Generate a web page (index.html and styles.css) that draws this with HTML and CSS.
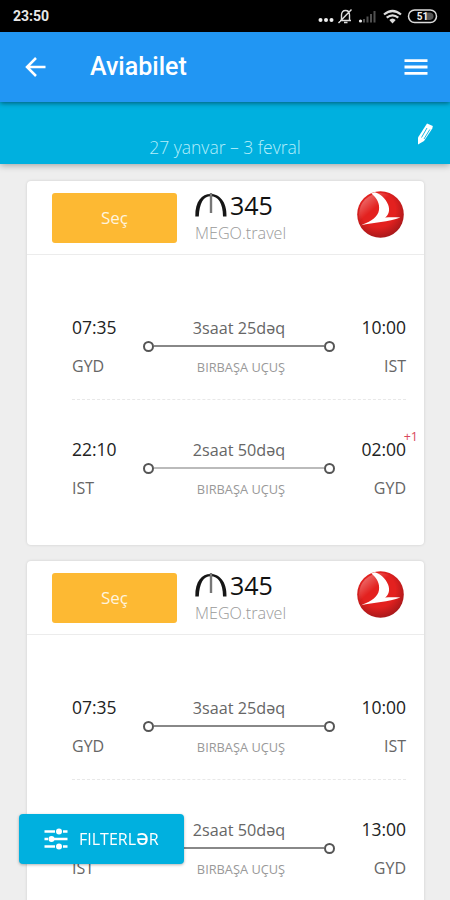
FILE: index.html
```html
<!DOCTYPE html>
<html lang="az">
    <head>
        <meta charset="utf-8">
        <title>Aviabilet</title>
        <meta name="viewport" content="width=device-width, initial-scale=1">
        <link rel="stylesheet" href="styles.css">
    </head>
    <body>
        <svg class="defs" width="0" height="0">
            <defs>
                <radialGradient id="red" cx="45%" cy="40%" r="62%">
                    <stop offset="0.6" stop-color="#e3211f"/>
                    <stop offset="1" stop-color="#a5181a"/>
                </radialGradient>
                <linearGradient id="shine" x1="0" y1="0" x2="0.6" y2="0.7">
                    <stop offset="0" stop-color="#fff" stop-opacity="0.5"/>
                    <stop offset="0.55" stop-color="#fff" stop-opacity="0"/>
                </linearGradient>
            </defs>
            <symbol id="airline" viewBox="0 0 46 46">
                <circle cx="23" cy="23" r="22.8" fill="url(#red)"/>
                <circle cx="23" cy="23" r="21" fill="url(#shine)"/>
                <path d="M14 2.500C19.500 6.500 22.500 13 21.500 18.500C20.500 25 15 29 4 33.500C16 31 31 30.500 42.500 26C37 25.500 32 25.500 27.500 26C31 23.500 32.500 19 30.500 13.500C28 7 23 3 17.500 1.200Z" fill="#fff"/>
            </symbol>
            <symbol id="manat" viewBox="0 0 32 26">
                <path d="M0.300 25.500C0 10 7 3 15.500 3S32 10 31.500 25.500H28C28 12 23 5.200 15.700 5.200S4.500 12 3.800 25.500Z" fill="#161616"/>
                <path d="M16 2V22" stroke="#777" stroke-width="2.400"/>
            </symbol>
        </svg>

        <div class="status">
            <span class="clock">23:50</span>
            <svg width="122" height="20" viewBox="0 0 122 20" fill="none" stroke="#ddd">
                <g fill="#eee" stroke="none">
                    <circle cx="3.500" cy="14" r="2"/><circle cx="9" cy="14" r="2"/><circle cx="14.500" cy="14" r="2"/>
                </g>
                <path d="M23 14.500H34M24.500 14V9C24.500 6 26 4.500 28.500 4.500S32.500 6 32.500 9V14M27 16.500H30.500M21.500 17L34.500 3.500" stroke-width="1.400"/>
                <circle cx="43.500" cy="15" r="1.600" fill="#eee" stroke="none"/>
                <path d="M47 16.500V13M50.500 16.500V10.500M54 16.500V8M57.500 16.500V5" stroke="#505050" stroke-width="2"/>
                <path d="M67 8.500Q75.500 1.500 84 8.500M69.700 11.700Q75.500 7 81.300 11.700" stroke-width="2.200"/>
                <path d="M72.300 14Q75.500 11 78.700 14L75.500 17.500Z" fill="#ddd" stroke="none"/>
                <rect x="91.500" y="4" width="28" height="12.500" rx="6.200" stroke-width="1.500"/>
                <path d="M108 6.500H113Q116.500 7 116.500 10.200T113 14H108Z" fill="#555" stroke="none"/>
                <text x="105.500" y="14" class="battery">51</text>
            </svg>
        </div>

        <header class="toolbar">
            <svg class="back" width="22" height="20" viewBox="0 0 22 20" fill="none" stroke="#fff" stroke-width="2.500">
                <path d="M11 1L2 10L11 19M2 10H20.500"/>
            </svg>
            <h1>Aviabilet</h1>
            <svg width="24" height="17" viewBox="0 0 24 17" stroke="#fff" stroke-width="2.800">
                <path d="M0.500 1.700H23.500M0.500 8H23.500M0.500 14.300H23.500"/>
            </svg>
        </header>

        <div class="dates">
            <span>27 yanvar – 3 fevral</span>
            <svg class="edit" width="16" height="22" viewBox="0 0 16 22">
                <path d="M10 0.500L15.800 3L15.300 5.500L7 18L1 21.500L1 14.500Z" fill="#fff"/>
                <path d="M10 5L4.500 14.500M12.800 6.500L7 16" stroke="#00b0df" stroke-width="0.900"/>
            </svg>
        </div>

        <main class="tickets">
            <article class="ticket">
                <div class="offer">
                    <button class="select">Seç</button>
                    <div class="price">
                        <div class="amount"><svg width="32" height="26"><use href="#manat"/></svg>345</div>
                        <div class="agency">MEGO.travel</div>
                    </div>
                    <svg class="logo" width="47" height="47"><use href="#airline"/></svg>
                </div>
                <div class="flight">
                    <div class="point"><b>07:35</b><span>GYD</span></div>
                    <div class="route">
                        <div class="duration">3saat 25dəq</div>
                        <div class="line"></div>
                        <div class="stops">BIRBAŞA UÇUŞ</div>
                    </div>
                    <div class="point arrival"><b>10:00</b><span>IST</span></div>
                </div>
                <div class="flight">
                    <div class="point"><b>22:10</b><span>IST</span></div>
                    <div class="route">
                        <div class="duration">2saat 50dəq</div>
                        <div class="line pale"></div>
                        <div class="stops">BIRBAŞA UÇUŞ</div>
                    </div>
                    <div class="point arrival"><b>02:00</b><i class="next-day">+1</i><span>GYD</span></div>
                </div>
            </article>

            <article class="ticket">
                <div class="offer">
                    <button class="select">Seç</button>
                    <div class="price">
                        <div class="amount"><svg width="32" height="26"><use href="#manat"/></svg>345</div>
                        <div class="agency">MEGO.travel</div>
                    </div>
                    <svg class="logo" width="47" height="47"><use href="#airline"/></svg>
                </div>
                <div class="flight">
                    <div class="point"><b>07:35</b><span>GYD</span></div>
                    <div class="route">
                        <div class="duration">3saat 25dəq</div>
                        <div class="line"></div>
                        <div class="stops">BIRBAŞA UÇUŞ</div>
                    </div>
                    <div class="point arrival"><b>10:00</b><span>IST</span></div>
                </div>
                <div class="flight">
                    <div class="point"><b></b><span>IST</span></div>
                    <div class="route">
                        <div class="duration">2saat 50dəq</div>
                        <div class="line"></div>
                        <div class="stops">BIRBAŞA UÇUŞ</div>
                    </div>
                    <div class="point arrival"><b>13:00</b><span>GYD</span></div>
                </div>
            </article>
        </main>

        <button class="filters">
            <svg width="24" height="22" viewBox="0 0 24 22" stroke="#fff" stroke-width="2.600">
                <path d="M0.500 3.500H11M19 3.500H23.500M0.500 11H4M10 11H23.500M0.500 18.500H11M19 18.500H23.500"/>
                <g fill="#fff" stroke="none">
                    <circle cx="15" cy="3.500" r="3"/><circle cx="7.500" cy="11" r="3"/><circle cx="15" cy="18.500" r="3"/>
                </g>
            </svg>
            <span>FILTERL<b>Ə</b>R</span>
        </button>
    </body>
</html>
```
FILE: styles.css
```css
*, *:before, *:after {
    box-sizing: border-box;
}

html, body {
    margin: 0;
    padding: 0;
    height: 100%;
    overflow: hidden;
    background: #eee;
    font-family: "Open Sans", "Noto Sans", sans-serif;
    color: #222;
}

svg {
    display: block;
}

.defs {
    position: absolute;
}

.status {
    display: flex;
    justify-content: space-between;
    align-items: center;
    height: 32px;
    padding: 0 11px 0 13px;
    background: #000;
}

.clock {
    color: #e8e8e8;
    font: bold 14px/32px Roboto, sans-serif;
}

.battery {
    fill: #eee;
    stroke: none;
    font: bold 10px Roboto, sans-serif;
    text-anchor: middle;
}

.toolbar {
    display: flex;
    align-items: center;
    height: 70px;
    padding: 0 22px 0 25px;
    background: #2196f3;
    box-shadow: 0 1px 5px rgba(0,0,0,0.5);
    position: relative;
    z-index: 2;
}

.toolbar h1 {
    flex: 1;
    margin: 0 0 0 43px;
    color: #fff;
    font: 500 25px/32px Roboto, sans-serif;
}

.dates {
    display: flex;
    justify-content: center;
    align-items: flex-end;
    height: 62px;
    padding-bottom: 5px;
    background: #00b0df;
    color: #b4eefb;
    font-size: 17.500px;
    line-height: 24px;
    font-weight: 300;
    box-shadow: 0 1px 7px rgba(0,0,0,0.35);
    position: relative;
    z-index: 1;
}

.edit {
    position: absolute;
    right: 17px;
    top: 21px;
}

.tickets {
    padding: 17px 26px 0 27px;
}

.ticket {
    height: 364px;
    margin-bottom: 16px;
    background: #fff;
    border-radius: 4px;
    box-shadow: 0 0 3px rgba(0,0,0,0.14);
}

.offer {
    display: flex;
    height: 74px;
    margin-bottom: 22px;
    padding: 10px 20px 0 25px;
    border-bottom: 1px solid #ececec;
}

button {
    border: 0;
    color: #fff;
    font-family: inherit;
    cursor: pointer;
}

.select {
    width: 125px;
    height: 50px;
    margin-top: 2px;
    padding: 0 0 2px;
    border-radius: 3px;
    background: #fdb933;
    color: #fff4df;
    font-size: 17px;
}

.price {
    flex: 1;
    margin-left: 18px;
}

.amount {
    display: flex;
    gap: 3px;
    height: 28px;
    font-size: 25px;
    line-height: 29px;
    color: #111;
}

.agency {
    font-size: 16.200px;
    line-height: 29px;
    font-weight: 300;
    color: #999;
}

.flight {
    display: flex;
    height: 122px;
    margin: 0 18px 0 45px;
    padding-top: 38px;
}

.flight + .flight {
    padding-top: 37px;
    border-top: 1px dashed #e8e8e8;
}

.point {
    display: flex;
    flex-direction: column;
    width: 71px;
    position: relative;
}

.point b {
    height: 39px;
    font-size: 17.500px;
    line-height: 24px;
    font-weight: 400;
}

.point span {
    font-size: 16px;
    line-height: 24px;
    color: #666;
}

.arrival {
    text-align: right;
}

.next-day {
    position: absolute;
    right: -12px;
    top: -8px;
    font-size: 12.500px;
    line-height: 16px;
    font-style: normal;
    color: #d9475a;
}

.route {
    flex: 1;
    text-align: center;
}

.duration {
    height: 26px;
    font-size: 16.200px;
    line-height: 27px;
    color: #666;
}

.line {
    display: flex;
    justify-content: space-between;
    align-items: center;
    height: 11px;
    background: linear-gradient(#888, #888) center 4px / 170px 2px no-repeat;
}

.pale {
    background-image: linear-gradient(#bbb, #bbb);
}

.line:before, .line:after {
    content: "";
    width: 11px;
    height: 11px;
    border: 2px solid #555;
    border-radius: 50%;
    background: #fff;
}

.stops {
    margin: 3px 0 0 4px;
    font-size: 12.800px;
    line-height: 24px;
    color: #999;
}

.filters {
    display: flex;
    align-items: center;
    gap: 11px;
    width: 165px;
    height: 50px;
    padding: 0 0 0 25px;
    border-radius: 4px;
    background: #00b0df;
    box-shadow: 0 1px 3px rgba(0,0,0,0.3);
    font-size: 16px;
    position: fixed;
    left: 19px;
    bottom: 36px;
}

.filters b {
    font-weight: 600;
}
```
